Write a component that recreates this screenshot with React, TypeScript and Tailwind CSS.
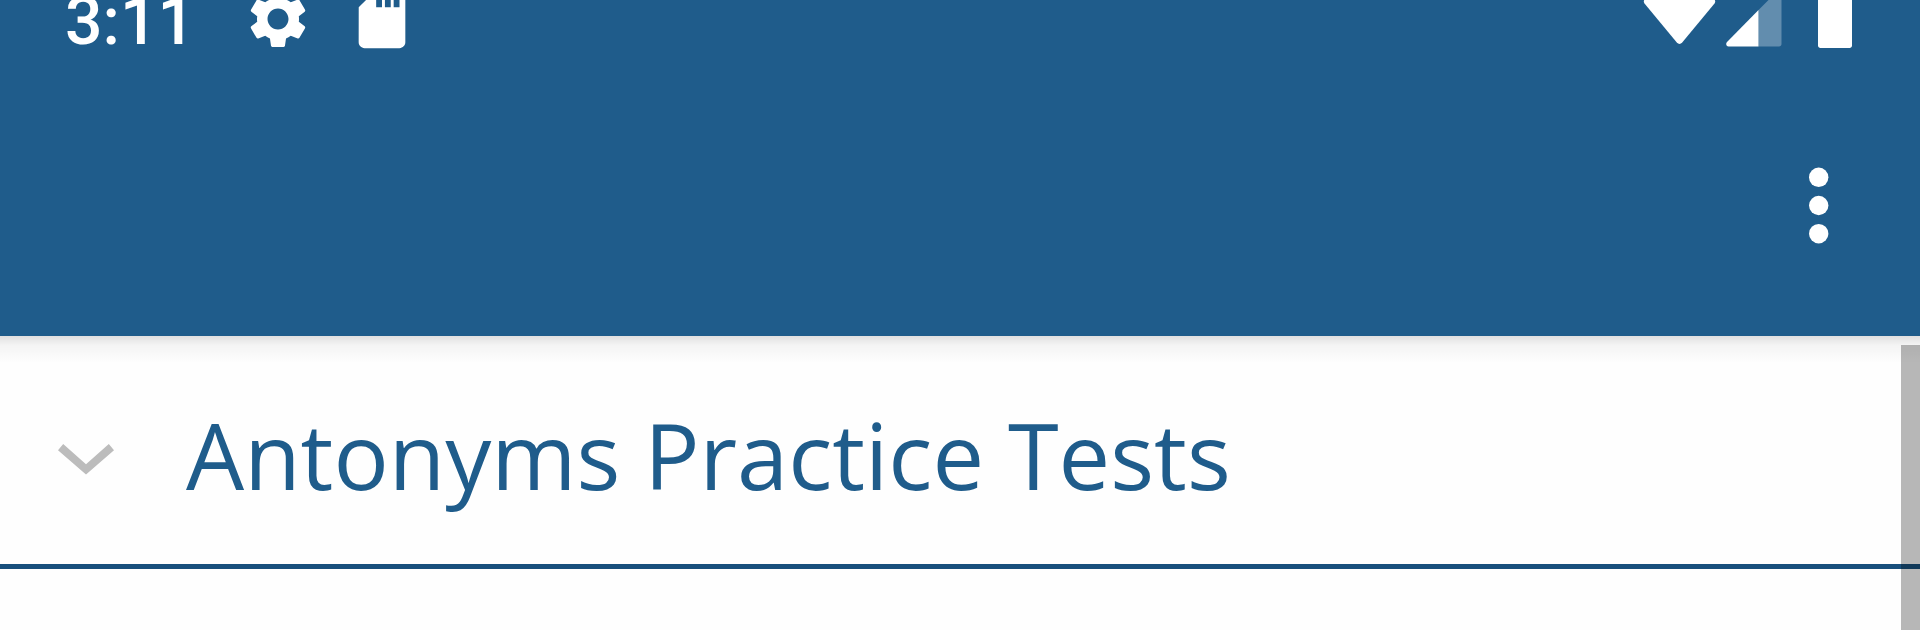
import { useState } from "react";
import { MdSdCard, MdSettings } from "react-icons/md";

function WifiIcon() {
  return (
    <svg width="74" height="56" viewBox="0 0 74 56" fill="currentColor" aria-hidden="true">
      <path d="M37.500 0C23.500 0 12 3 3 8C1.500 9.500 1.500 11 2.500 12.500L34.800 51.500C36.500 53.400 38.500 53.400 40.200 51.500L72.500 12.500C73.500 11 73.500 9.500 72 8C63 3 51.500 0 37.500 0Z" />
    </svg>
  );
}

function SignalIcon() {
  return (
    <svg width="56" height="56" viewBox="0 0 56 56" fill="currentColor" aria-hidden="true">
      <path
        d="M32.500 19L50.500 1C52.500 -.5 55.500 .8 55.500 3.500V53C55.500 54.500 54.500 55.500 53 55.500H32.500Z"
        opacity="0.3"
      />
      <path d="M32.500 19V55.500H2.500C.2 55.500 -.5 52.700 1 51Z" />
    </svg>
  );
}

function BatteryIcon() {
  return (
    <svg width="34" height="58" viewBox="0 0 34 58" fill="currentColor" aria-hidden="true">
      <path d="M11 0H23V6H31.500C33 6 34 7 34 8.500V55.500C34 57 33 58 31.500 58H2.500C1 58 0 57 0 55.500V8.500C0 7 1 6 2.500 6H11Z" />
    </svg>
  );
}

function StatusBar() {
  return (
    <div className="-mt-9 flex h-[110px] items-center justify-between pr-[68px] pl-[65px]">
      <div className="flex items-end">
        <span className="font-[Roboto,sans-serif] text-[66px] leading-[64px] font-medium">3:11</span>
        <MdSettings className="ml-12 size-[70px]" />
        <MdSdCard className="ml-[34px] size-[70px]" />
      </div>
      <div className="flex items-center gap-9">
        <div className="flex items-center gap-2.5">
          <WifiIcon />
          <SignalIcon />
        </div>
        <BatteryIcon />
      </div>
    </div>
  );
}

export default function App() {
  const [open, setOpen] = useState(false);

  return (
    <div className="flex min-h-screen flex-col bg-[#fefefe]">
      <header className="bg-[#1f5c8b] text-white">
        <StatusBar />
        <div className="flex h-[262px] items-center justify-end pr-[65px]">
          <button type="button" aria-label="More options" className="flex w-[72px] justify-center py-4">
            <svg width="20" height="78" viewBox="0 0 20 78" fill="currentColor" aria-hidden="true">
              <circle cx="9.700" cy="11.300" r="9.700" />
              <circle cx="9.700" cy="39.500" r="9.700" />
              <circle cx="9.700" cy="67.700" r="9.700" />
            </svg>
          </button>
        </div>
      </header>

      <main className="relative flex-1">
        <h1 className="border-b-5 border-[#184f7c]">
          <button
            type="button"
            aria-expanded={open}
            onClick={() => setOpen(!open)}
            className="flex h-[228px] w-full items-center gap-[72px] bg-linear-to-b from-black/12 via-black/4 via-4% to-transparent to-12% pt-2.5 pl-[58px] text-left text-[#1f5c8b]"
          >
            <svg width="56" height="42" viewBox="0 0 56 42" className="shrink-0 text-[#bcbcbc]" aria-hidden="true">
              <path d="M0 16.200L5.200 10L28 30.300L50.800 10L56 16.200L28 40.500Z" fill="currentColor" />
            </svg>
            <span className="font-['Open_Sans',sans-serif] text-[92px] leading-[124px] font-normal">
              Antonyms Practice Tests
            </span>
          </button>
        </h1>
        <div className="absolute top-[9px] right-0 bottom-0 w-[19px] bg-black/28" />
      </main>
    </div>
  );
}
